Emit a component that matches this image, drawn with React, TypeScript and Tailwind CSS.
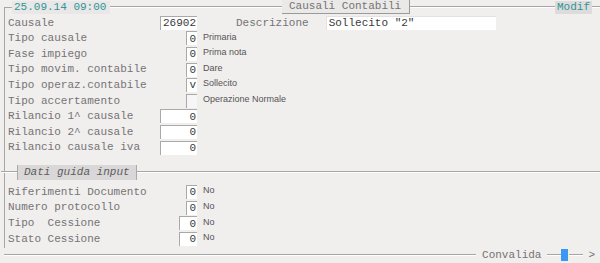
import React from 'react';

const mono = 'font-["Liberation_Mono","Courier_New",monospace]';
const sans = 'font-["Liberation_Sans",Arial,sans-serif]';

const Box = ({ w, children, blank }: { w: string; children?: React.ReactNode; blank?: boolean }) => (
  <div
    className={`${w} h-[14px] flex items-center justify-end pr-[1px] border-l border-t border-[#a9a9a9] text-[11px] text-[#3a3a3a] ${mono} ${blank ? 'bg-[#f7f6f6]' : 'bg-white'}`}
  >
    {children}
  </div>
);

type Row = { label: string; value: string; w: string; note?: string; blank?: boolean };

const FieldRow = ({ label, value, w, note, blank }: Row) => (
  <div className="flex items-center h-[15.6px]">
    <div className="w-[189px] flex items-center justify-between">
      <span className={`text-[11px] text-[#747474] whitespace-pre ${mono}`}>{label}</span>
      <Box w={w} blank={blank}>{value}</Box>
    </div>
    {note && <span className={`ml-[6px] text-[9px] text-[#555] -mt-[2px] ${sans}`}>{note}</span>}
  </div>
);

const mainRows: Row[] = [
  { label: 'Tipo causale', value: '0', w: 'w-[11px]', note: 'Primaria' },
  { label: 'Fase impiego', value: '0', w: 'w-[11px]', note: 'Prima nota' },
  { label: 'Tipo movim. contabile', value: '0', w: 'w-[11px]', note: 'Dare' },
  { label: 'Tipo operaz.contabile', value: 'v', w: 'w-[11px]', note: 'Sollecito' },
  { label: 'Tipo accertamento', value: '', w: 'w-[11px]', note: 'Operazione Normale', blank: true },
  { label: 'Rilancio 1^ causale', value: '0', w: 'w-[37px]' },
  { label: 'Rilancio 2^ causale', value: '0', w: 'w-[37px]' },
  { label: 'Rilancio causale iva', value: '0', w: 'w-[37px]' },
];

const guideRows: Row[] = [
  { label: 'Riferimenti Documento', value: '0', w: 'w-[11px]', note: 'No' },
  { label: 'Numero protocollo', value: '0', w: 'w-[11px]', note: 'No' },
  { label: 'Tipo  Cessione', value: '0', w: 'w-[18px]', note: 'No' },
  { label: 'Stato Cessione', value: '0', w: 'w-[18px]', note: 'No' },
];

const Line = ({ className = '' }: { className?: string }) => (
  <div className={`h-[2px] border-t border-[#a6a6a6] border-b border-b-white ${className}`} />
);

export default function App() {
  return (
    <div className="w-[600px] h-[263px] bg-[#f1eeee] overflow-hidden relative">
      {/* header */}
      <div className="flex items-center h-[14px] pl-[4px]">
        <div className="w-[8px] h-[7px] self-end border-l border-t border-[#a6a6a6]" />
        <div className={`w-[98px] h-[13px] px-[2px] bg-[#e9e7e7] text-[11px] leading-[13px] text-[#2f9696] ${mono}`}>25.09.14 09:00</div>
        <Line className="w-[172px]" />
        <div className={`w-[128px] h-[14px] pl-[7px] bg-[#ebe8e8] border-r border-b border-[#9a9a9a] text-[11px] leading-[13px] text-[#747474] ${mono}`}>
          Causali Contabili
        </div>
        <Line className="flex-1" />
        <div className={`w-[37px] h-[13px] px-[2px] bg-[#dddbdb] text-[11px] leading-[13px] text-[#2f9696] ${mono}`}>Modif</div>
        <Line className="w-[8px]" />
      </div>

      {/* body */}
      <div className="ml-[4px] border-l border-[#a6a6a6] pl-[3px] pt-[1px] h-[234px]">
        <div className="flex items-center h-[15.6px]">
          <div className="w-[189px] flex items-center justify-between">
            <span className={`text-[11px] text-[#747474] ${mono}`}>Causale</span>
            <Box w="w-[37px]">26902</Box>
          </div>
          <span className={`ml-[39px] text-[11px] text-[#747474] ${mono}`}>Descrizione</span>
          <div className={`ml-[17px] w-[170px] h-[14px] bg-white border-l border-t border-[#e2e2e2] pl-[2px] text-[11px] leading-[13px] text-[#3a3a3a] ${mono}`}>
            Sollecito "2"
          </div>
        </div>
        {mainRows.map((r) => (
          <FieldRow key={r.label} {...r} />
        ))}

        {/* section */}
        <div className="flex items-center h-[16px] mt-[9px] -ml-[7px]">
          <Line className="w-[16px]" />
          <div className={`h-[15px] px-[6px] bg-[#d9d7d7] border-l border-r border-[#aaa] text-[11px] italic leading-[14px] text-[#5c5c5c] ${mono}`}>
            Dati guida input
          </div>
          <Line className="flex-1" />
        </div>
        <div className="mt-[4px]">
          {guideRows.map((r) => (
            <FieldRow key={r.label} {...r} />
          ))}
        </div>
      </div>

      {/* footer */}
      <div className="flex items-center h-[14px] pl-[4px]">
        <Line className="w-[473px]" />
        <span className={`mx-[6px] text-[11px] text-[#747474] ${mono}`}>Convalida</span>
        <Line className="w-[14px]" />
        <div className="w-[8px] h-[12px] bg-[#3b97f5] border-r border-[#f3f0c0]" />
        <Line className="w-[14px]" />
        <span className={`mx-[5px] text-[11px] text-[#747474] ${mono}`}>&gt;</span>
        <Line className="flex-1" />
      </div>
    </div>
  );
}
